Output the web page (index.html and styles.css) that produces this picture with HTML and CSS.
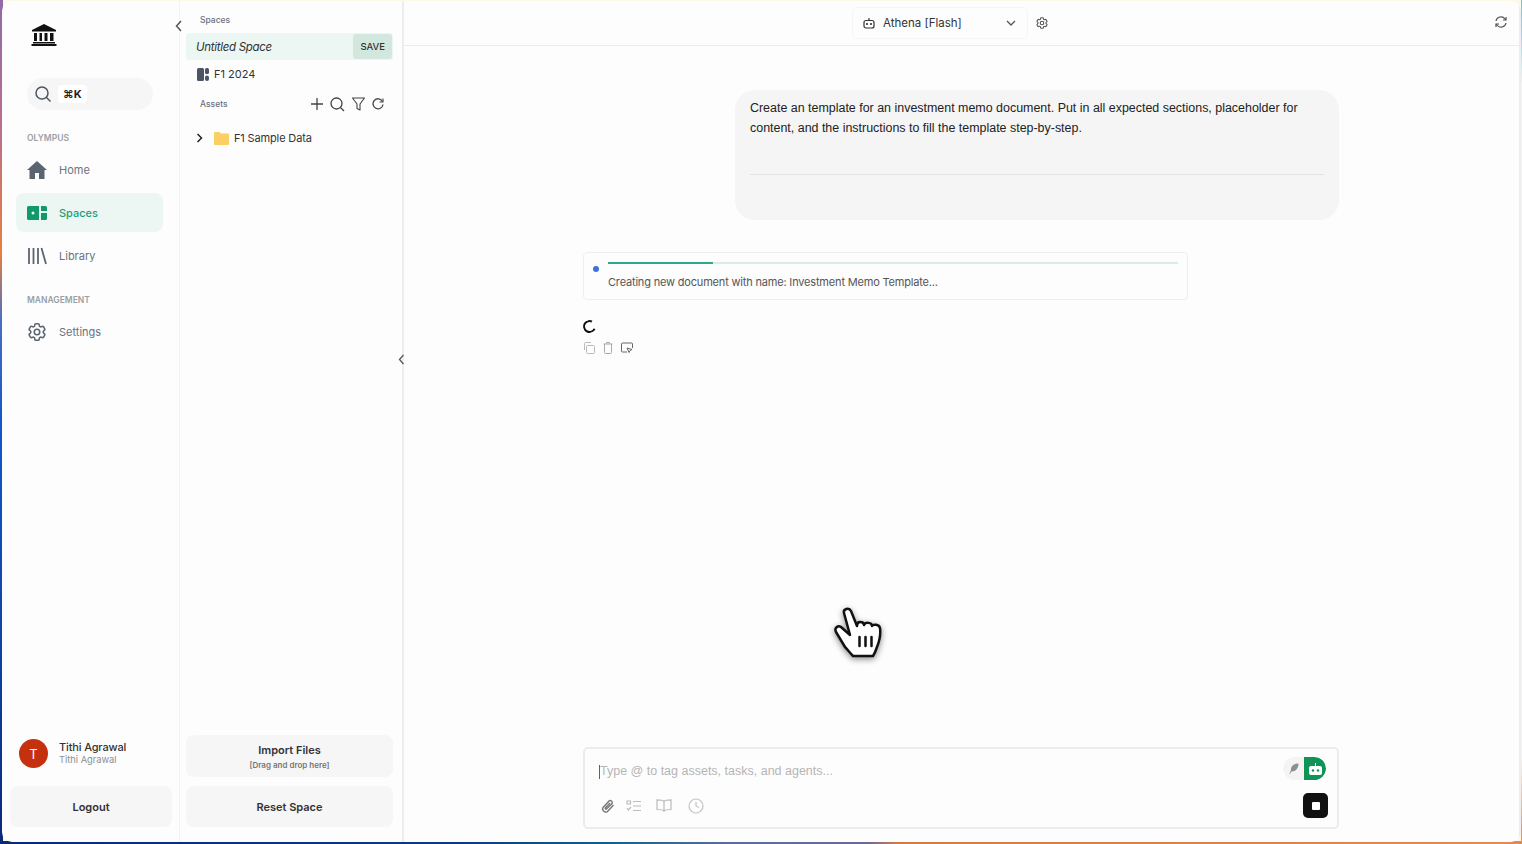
FILE: index.html
```html
<!DOCTYPE html>
<html lang="en">
<head>
    <meta charset="UTF-8">
    <meta name="viewport" content="width=device-width, initial-scale=1.0">
    <title>Olympus</title>
    <link rel="stylesheet" href="styles.css">
</head>
<body>
<div class="window">

    <!-- left nav -->
    <aside class="sidebar">
        <div class="logo">
            <svg width="26" height="22" viewBox="0 0 26 22" fill="#111"><path d="M13 0 25 6v1.500H1V6zM3 9h3v8H3zM8.500 9h2.500v8H8.500zM13.500 9h3v8h-3zM19 9h3.500v8H19zM2 18h22v1.500H2zM0.500 20h25v2H0.500z"/></svg>
        </div>
        <div class="search-pill">
            <svg width="18" height="18" viewBox="0 0 18 18" fill="none" stroke="#4b5563" stroke-width="1.500"><circle cx="8" cy="8" r="6"/><path d="m12.500 12.500 4 4"/></svg>
            <span class="kbd">⌘K</span>
        </div>
        <div class="nav-label">OLYMPUS</div>
        <a class="nav-item">
            <svg width="20" height="18" viewBox="0 0 20 18" fill="#5b6572"><path d="M10 0 20 9h-2.500v9H12v-6H8v6H2.500V9H0z"/></svg>
            Home
        </a>
        <a class="nav-item active">
            <svg width="20" height="16" viewBox="0 0 20 16" fill="#109a6c"><path d="M1.500 1h10.500v14H1.500A1.500 1.500 0 0 1 0 13.500v-11A1.500 1.500 0 0 1 1.500 1zM14 1h4.500A1.500 1.500 0 0 1 20 2.500V6h-6zM14 8h6v5.500a1.500 1.500 0 0 1-1.500 1.500H14z"/><circle cx="6" cy="8" r="1.500" fill="#e8f5f0"/></svg>
            Spaces
        </a>
        <a class="nav-item">
            <svg width="20" height="18" viewBox="0 0 20 18" fill="none" stroke="#5b6572" stroke-width="1.800"><path d="M2 1v16M6.500 1v16M11 1v16M14.500 1l4.500 16"/></svg>
            Library
        </a>
        <div class="nav-label second">MANAGEMENT</div>
        <a class="nav-item">
            <svg width="22" height="22" viewBox="0 0 24 24" fill="none" stroke="#5b6572" stroke-width="1.700" stroke-linejoin="round"><path d="M9.594 3.940c.09-.542.56-.94 1.110-.94h2.593c.55 0 1.020.398 1.110.94l.213 1.281c.063.374.313.686.645.870.074.04.147.083.22.127.324.196.72.257 1.075.124l1.217-.456a1.125 1.125 0 0 1 1.370.49l1.296 2.247a1.125 1.125 0 0 1-.26 1.431l-1.003.827c-.293.24-.438.613-.431.992a6.759 6.759 0 0 1 0 .255c-.007.378.138.75.43.99l1.005.828c.424.35.534.954.26 1.430l-1.298 2.247a1.125 1.125 0 0 1-1.369.491l-1.217-.456c-.355-.133-.75-.072-1.076.124a6.570 6.570 0 0 1-.22.128c-.331.183-.581.495-.644.869l-.213 1.280c-.09.543-.56.941-1.110.941h-2.594c-.55 0-1.020-.398-1.110-.94l-.213-1.281c-.062-.374-.312-.686-.644-.87a6.520 6.520 0 0 1-.22-.127c-.325-.196-.72-.257-1.076-.124l-1.217.456a1.125 1.125 0 0 1-1.369-.49l-1.297-2.247a1.125 1.125 0 0 1 .26-1.431l1.004-.827c.292-.24.437-.613.43-.992a6.932 6.932 0 0 1 0-.255c.007-.378-.138-.75-.43-.99l-1.004-.828a1.125 1.125 0 0 1-.26-1.430l1.297-2.247a1.125 1.125 0 0 1 1.370-.491l1.216.456c.356.133.751.072 1.076-.124.072-.044.146-.087.22-.128.332-.183.582-.495.644-.869l.214-1.281z"/><circle cx="12" cy="12" r="3"/></svg>
            Settings
        </a>

        <div class="user">
            <div class="avatar">T</div>
            <div>
                <div class="user-name">Tithi Agrawal</div>
                <div class="user-sub">Tithi Agrawal</div>
            </div>
        </div>
        <button class="soft-btn logout">Logout</button>

        <svg class="collapse-left" width="8" height="12" viewBox="0 0 8 12" fill="none" stroke="#555" stroke-width="1.500"><path d="M6 1 1.500 6 6 11"/></svg>
    </aside>

    <!-- spaces panel -->
    <section class="panel">
        <div class="panel-label">Spaces</div>
        <div class="space-row">
            <em>Untitled Space</em>
            <span class="save">SAVE</span>
        </div>
        <div class="space-item">
            <svg width="12" height="13" viewBox="0 0 12 13" fill="#4b5563"><rect width="7" height="13" rx="1.500"/><rect x="8" width="4" height="6" rx="1.500"/><rect x="8" y="7.500" width="4" height="5.500" rx="2"/></svg>
            F1 2024
        </div>
        <div class="assets-head">
            <span class="panel-label">Assets</span>
            <div class="asset-tools">
                <svg width="12" height="12" viewBox="0 0 12 12" stroke="#444" stroke-width="1.300"><path d="M6 0v12M0 6h12"/></svg>
                <svg width="15" height="15" viewBox="0 0 15 15" fill="none" stroke="#444" stroke-width="1.300"><circle cx="6.500" cy="6.500" r="5.500"/><path d="m10.500 10.500 3.500 3.500"/></svg>
                <svg width="13" height="14" viewBox="0 0 13 14" fill="none" stroke="#444" stroke-width="1.100" stroke-linejoin="round"><path d="M.5 1h12L8 7v6L5 11.500V7z"/></svg>
                <svg width="12" height="12" viewBox="0 0 12 12" fill="none" stroke="#444" stroke-width="1.300"><path d="M10.500 3.500A5 5 0 1 0 11 6.500"/><path d="M11 .5v3.500H7.500" stroke-width="1.100"/></svg>
            </div>
        </div>
        <div class="tree-row">
            <svg width="7" height="10" viewBox="0 0 7 10" fill="none" stroke="#222" stroke-width="1.500"><path d="m1.500 1 4 4-4 4"/></svg>
            <svg class="folder" width="15" height="13" viewBox="0 0 15 13" fill="#fbcf62"><path d="M1 0h4.500l1.500 1.500h7a1 1 0 0 1 1 1V12a1 1 0 0 1-1 1H1a1 1 0 0 1-1-1V1a1 1 0 0 1 1-1z"/></svg>
            F1 Sample Data
        </div>
        <div class="panel-bottom">
            <button class="soft-btn import">Import Files<small>[Drag and drop here]</small></button>
            <button class="soft-btn">Reset Space</button>
        </div>
        <svg class="collapse-right" width="7" height="11" viewBox="0 0 7 11" fill="none" stroke="#555" stroke-width="1.300"><path d="M5.500 1 1.500 5.500 5.500 10"/></svg>
    </section>

    <!-- chat -->
    <main class="main">
        <header class="topbar">
            <div class="agent-select">
                <svg width="12" height="12" viewBox="0 0 12 12" fill="none" stroke="#333" stroke-width="1.200"><rect x="1" y="3.500" width="10" height="7.500" rx="2"/><path d="M6 3.500V1"/><circle cx="4" cy="7" r=".5"/><circle cx="8" cy="7" r=".5"/></svg>
                <span>Athena [Flash]</span>
                <svg class="chev" width="10" height="6" viewBox="0 0 10 6" fill="none" stroke="#555" stroke-width="1.300"><path d="m1 1 4 4 4-4"/></svg>
            </div>
            <svg class="top-gear" width="14" height="14" viewBox="0 0 24 24" fill="none" stroke="#555" stroke-width="1.900" stroke-linejoin="round"><path d="M9.594 3.940c.09-.542.56-.94 1.110-.94h2.593c.55 0 1.020.398 1.110.94l.213 1.281c.063.374.313.686.645.870.074.04.147.083.22.127.324.196.72.257 1.075.124l1.217-.456a1.125 1.125 0 0 1 1.370.49l1.296 2.247a1.125 1.125 0 0 1-.26 1.431l-1.003.827c-.293.24-.438.613-.431.992a6.759 6.759 0 0 1 0 .255c-.007.378.138.75.43.99l1.005.828c.424.35.534.954.26 1.430l-1.298 2.247a1.125 1.125 0 0 1-1.369.491l-1.217-.456c-.355-.133-.75-.072-1.076.124a6.570 6.570 0 0 1-.22.128c-.331.183-.581.495-.644.869l-.213 1.280c-.09.543-.56.941-1.110.941h-2.594c-.55 0-1.020-.398-1.110-.94l-.213-1.281c-.062-.374-.312-.686-.644-.87a6.520 6.520 0 0 1-.22-.127c-.325-.196-.72-.257-1.076-.124l-1.217.456a1.125 1.125 0 0 1-1.369-.49l-1.297-2.247a1.125 1.125 0 0 1 .26-1.431l1.004-.827c.292-.24.437-.613.43-.992a6.932 6.932 0 0 1 0-.255c.007-.378-.138-.75-.43-.99l-1.004-.828a1.125 1.125 0 0 1-.26-1.430l1.297-2.247a1.125 1.125 0 0 1 1.370-.491l1.216.456c.356.133.751.072 1.076-.124.072-.044.146-.087.22-.128.332-.183.582-.495.644-.869l.214-1.281z"/><circle cx="12" cy="12" r="3"/></svg>
            <svg class="top-refresh" width="12" height="12" viewBox="0 0 12 12" fill="none" stroke="#555" stroke-width="1.200"><path d="M1 5A5 5 0 0 1 10 3l1 1M11 7a5 5 0 0 1-9 2L1 8"/><path d="M11 1v3H8M1 11V8h3"/></svg>
        </header>

        <div class="chat">
            <div class="bubble">
                <p>Create an template for an investment memo document. Put in all expected sections, placeholder for content, and the instructions to fill the template step-by-step.</p>
                <hr>
            </div>

            <div class="progress-card">
                <span class="dot"></span>
                <div class="progress-body">
                    <div class="track"><div class="fill" style="width: 18.5%"></div></div>
                    <div class="progress-text">Creating new document with name: Investment Memo Template...</div>
                </div>
            </div>

            <div class="spinner"></div>
            <div class="msg-tools">
                <svg width="12" height="12" viewBox="0 0 12 12" fill="none" stroke="#bbb" stroke-width="1"><rect x="3.500" y="3.500" width="8" height="8" rx="1"/><path d="M1.500 8V1.500A1 1 0 0 1 2.500.5H8"/></svg>
                <svg width="10" height="12" viewBox="0 0 10 12" fill="none" stroke="#aaa" stroke-width="1"><path d="M.5 2h9M1.500 2v8.500a1 1 0 0 0 1 1h5a1 1 0 0 0 1-1V2M3.500 2V.5h3V2"/></svg>
                <svg width="12" height="12" viewBox="0 0 12 12" fill="none" stroke="#666" stroke-width="1"><path d="M6 10H1.500a1 1 0 0 1-1-1V2a1 1 0 0 1 1-1h9a1 1 0 0 1 1 1v4"/><path d="m6 6 5 1.500-2 1-1 2z"/></svg>
            </div>

            <div class="composer">
                <div class="composer-top">
                    <div class="placeholder"><span class="caret"></span>Type @ to tag assets, tasks, and agents...</div>
                    <div class="mode-toggle">
                        <span class="mode-off">
                            <svg width="10" height="11" viewBox="0 0 10 11" fill="#8b8f96"><path d="M9.500.5C6 .5 2.500 2 2 6l-.2 1.500L.5 10.500l.7.300L2.500 8.500C7 8.500 9.500 5 9.500.5z"/></svg>
                        </span>
                        <span class="mode-on">
                            <svg width="13" height="12" viewBox="0 0 13 12" fill="#fff"><path d="M6 0h1v3H6z"/><rect y="3" width="13" height="9" rx="2"/><circle cx="4" cy="7.500" r="1.200" fill="#0f9457"/><circle cx="9" cy="7.500" r="1.200" fill="#0f9457"/></svg>
                        </span>
                    </div>
                </div>
                <div class="composer-bottom">
                    <div class="composer-tools">
                        <svg width="14" height="14" viewBox="0 0 14 14" fill="none" stroke="#777" stroke-width="1.400"><path d="M12.500 6 7 12a3 3 0 0 1-4.500-4L8 2a2 2 0 0 1 3 2.500L5.500 10a.8.800 0 0 1-1.200-1L9 4"/></svg>
                        <svg width="15" height="12" viewBox="0 0 15 12" fill="none" stroke="#bbb" stroke-width="1.200"><path d="M7 1.500h8M7 6h8M7 10.500h8M1 1h3.500v3H1zM1 8l1.500 2 2.500-3"/></svg>
                        <svg width="16" height="13" viewBox="0 0 16 13" fill="none" stroke="#bbb" stroke-width="1.200"><path d="M8 2.500C7 1 5 .8 1 .8v9.700c4 0 6 .2 7 1.700 1-1.500 3-1.700 7-1.700V.8c-4 0-6 .2-7 1.700zM8 2.500v9.700"/></svg>
                        <svg width="16" height="16" viewBox="0 0 16 16" fill="none" stroke="#c4c4c4" stroke-width="1.200"><circle cx="8" cy="8" r="7"/><path d="M8 4v4l3 1.500"/></svg>
                    </div>
                    <button class="stop-btn"><span></span></button>
                </div>
            </div>
        </div>
    </main>

    <!-- screen recording pointer, sits over the chat -->
    <svg class="hand" width="80" height="75" viewBox="0 0 80 75">
        <path d="M23 17c-1-4 5-6 7-2l6 15c0-3 1-4 3-4 3 0 4 1 4 3 1-3 8-3 8 1 1-2 7-2 8 2 1 7-1 14-3 19-1 3-2 6-4 9H32c-3-3-5-6-8-9l-9-15c-2-4 2-7 5-5l9 8z" fill="#fff" stroke="#111" stroke-width="2.500" stroke-linejoin="round"/>
        <path d="M38.500 41v9M44.500 41v9M50.500 41v9" stroke="#111" stroke-width="2.500" stroke-linecap="round"/>
    </svg>
</div>
</body>
</html>
```

FILE: styles.css
```css
* {
    box-sizing: border-box;
}

html, body {
    height: 100%;
    margin: 0;
}

body {
    font-family: Inter, "Liberation Sans", sans-serif;
    color: #333;
    overflow: hidden;
    padding: 1px 1px 2px 2px;
    background:
        linear-gradient(180deg, #8f6aa8 0%, #b8708c 15%, #e5803f 30%, #4a6fc0 38%, #1456c8 50%, #0f44a8 75%, #0a2a78 100%) left / 3px 100% no-repeat,
        linear-gradient(90deg, #0a2a78 0%, #0b3a80 30%, #12608a 40%, #5a6ea0 48%, #6a6a98 57%, #d57a45 59%, #e08a55 100%) bottom / 100% 3px no-repeat,
        linear-gradient(180deg, #5ec8e8 0%, #f4f4f4 10%, #f4f4f4 90%, #e08a55 100%) right / 1px 100% no-repeat,
        #fdf9e8;
}

.window {
    position: relative;
    display: flex;
    height: 100%;
    background: #fdfdfd;
    border-radius: 10px;
    overflow: hidden;
}

/* left nav */
.sidebar {
    position: relative;
    width: 178px;
    flex: none;
    display: flex;
    flex-direction: column;
    padding: 0 8px 15px 8px;
    border-right: 1px solid #f3f3f3;
}

.logo {
    margin: 23px 0 0 21px;
    height: 22px;
}

.search-pill {
    margin: 32px 0 0 17px;
    width: 126px;
    height: 32px;
    border-radius: 16px;
    background: #f6f6f6;
    display: flex;
    align-items: center;
    gap: 6px;
    padding-left: 7px;
}

.kbd {
    background: #fff;
    border-radius: 4px;
    padding: 2px 5px;
    font-size: 11px;
    font-weight: 700;
    color: #222;
}

.nav-label {
    margin: 23px 0 0 17px;
    font-size: 8.500px;
    line-height: 11px;
    font-weight: 600;
    color: #9a9fa6;
}

.nav-label.second {
    margin-top: 20px;
}

.nav-item {
    display: flex;
    align-items: center;
    gap: 12px;
    height: 39px;
    margin: 4px 8px 0 6px;
    padding-left: 11px;
    border-radius: 8px;
    font-size: 11px;
    color: #6b7280;
}

.nav-label + .nav-item {
    margin-top: 6px;
}

.nav-item.active {
    background: #ecf6f2;
    color: #1f9e77;
    font-weight: 500;
}

.nav-item svg {
    flex: none;
}

/* settings icon is drawn wider than the others */
.nav-item:last-of-type svg {
    margin: 0 -1px;
}

.user {
    margin-top: auto;
    margin-left: 9px;
    display: flex;
    align-items: center;
    gap: 11px;
}

.avatar {
    width: 29px;
    height: 29px;
    border-radius: 50%;
    background: #c5310f;
    color: #fff;
    font-size: 13px;
    display: flex;
    align-items: center;
    justify-content: center;
}

.user-name {
    font-size: 11px;
    line-height: 13px;
    font-weight: 500;
    letter-spacing: -.15px;
    color: #333;
}

.user-sub {
    font-size: 9.300px;
    line-height: 12px;
    color: #8b8f96;
}

.soft-btn {
    border: none;
    border-radius: 8px;
    background: #f6f6f6;
    font-family: inherit;
    font-size: 11px;
    font-weight: 600;
    color: #333;
    height: 41px;
    width: 100%;
}

.logout {
    margin-top: 18px;
    width: 162px;
}

.collapse-left {
    position: absolute;
    right: -4px;
    top: 19px;
}

/* spaces panel */
.panel {
    position: relative;
    width: 224px;
    flex: none;
    display: flex;
    flex-direction: column;
    padding: 14px 9px 15px 6px;
    border-right: 2px solid #ededed;
}

.panel-label {
    font-size: 8.500px;
    line-height: 11px;
    color: #6b7280;
    font-weight: 500;
    margin-left: 14px;
}

.space-row {
    margin-top: 7px;
    height: 27px;
    background: #ecf6f2;
    border-radius: 3px;
    display: flex;
    align-items: center;
    justify-content: space-between;
    padding: 0 1px 0 10px;
    font-size: 11.500px;
    letter-spacing: -.3px;
    color: #333;
}

.save {
    background: #d2e7de;
    border-radius: 3px;
    font-size: 9.500px;
    letter-spacing: 0;
    line-height: 25px;
    padding: 0 7px;
    color: #333;
    font-weight: 500;
}

.space-item {
    margin: 7px 0 0 11px;
    height: 14px;
    display: flex;
    align-items: center;
    gap: 5px;
    font-size: 11px;
    color: #333;
}

.assets-head {
    margin-top: 16px;
    height: 14px;
    display: flex;
    align-items: center;
    justify-content: space-between;
    padding-right: 9px;
}

.asset-tools {
    display: flex;
    align-items: center;
    gap: 7px;
}

.tree-row {
    margin: 20px 0 0 10px;
    display: flex;
    align-items: center;
    font-size: 11px;
    letter-spacing: -.15px;
    line-height: 14px;
    color: #333;
}

.folder {
    margin: 0 5px 0 11px;
}

.panel-bottom {
    margin-top: auto;
    display: flex;
    flex-direction: column;
    gap: 9px;
}

.soft-btn.import {
    height: 42px;
    display: flex;
    flex-direction: column;
    align-items: center;
    justify-content: center;
    gap: 3px;
}

.soft-btn small {
    font-size: 8px;
    font-weight: 600;
    color: #777;
}

.collapse-right {
    position: absolute;
    right: -3px;
    top: 353px;
}

/* chat */
.main {
    flex: 1;
    min-width: 0;
    display: flex;
    flex-direction: column;
    border-right: 2px solid #ededed;
}

.topbar {
    position: relative;
    height: 45px;
    flex: none;
    border-bottom: 1px solid #ececec;
    display: flex;
    align-items: center;
    padding-left: 448px;
}

.agent-select {
    width: 176px;
    height: 32px;
    border: 1px solid #f5f5f5;
    border-radius: 5px;
    display: flex;
    align-items: center;
    padding: 0 11px 0 10px;
    font-size: 11.500px;
    color: #333;
    gap: 8px;
}

.chev {
    margin-left: auto;
}

.top-gear {
    margin-left: 7px;
}

.top-refresh {
    position: absolute;
    right: 12px;
    top: 15px;
}

.chat {
    flex: 1;
    min-height: 0;
    width: 756px;
    margin-left: 179px;
    display: flex;
    flex-direction: column;
    padding: 44px 0 13px 0;
}

.bubble {
    align-self: flex-end;
    width: 604px;
    height: 130px;
    border-radius: 20px;
    background: #f5f5f5;
    padding: 8px 15px 0;
    font-family: "Liberation Sans", Arial, sans-serif;
    font-size: 12.450px;
    line-height: 20px;
    color: #222;
}

.bubble p {
    margin: 0;
}

.bubble hr {
    border: none;
    border-top: 1px solid #e2e2e2;
    margin: 36px 0 0;
}

.progress-card {
    margin-top: 32px;
    width: 605px;
    height: 48px;
    border: 1px solid #efefef;
    border-radius: 4px;
    display: flex;
    padding: 9px 9px 0 9px;
    gap: 9px;
}

.dot {
    width: 6px;
    height: 6px;
    margin-top: 4px;
    border-radius: 50%;
    background: #3b74d8;
    flex: none;
}

.progress-body {
    flex: 1;
}

.track {
    height: 2px;
    background: #d9ece6;
}

.fill {
    height: 100%;
    background: #2fa98a;
}

.progress-text {
    margin-top: 8px;
    font-size: 11px;
    letter-spacing: -.18px;
    line-height: 20px;
    color: #555;
}

.spinner {
    margin-top: 20px;
    width: 13px;
    height: 13px;
    border-radius: 50%;
    border: 2px solid #111;
    border-right-color: transparent;
    transform: rotate(-20deg);
}

.msg-tools {
    margin: 9px 0 0 0;
    display: flex;
    align-items: center;
    gap: 8px;
}

.composer {
    margin-top: auto;
    height: 82px;
    border: 2px solid #ececec;
    border-radius: 5px;
    padding: 7px 11px 9px 14px;
    display: flex;
    flex-direction: column;
    justify-content: space-between;
}

.composer-top {
    display: flex;
    justify-content: space-between;
    align-items: flex-start;
}

.placeholder {
    display: flex;
    align-items: center;
    margin-top: 8px;
    font-family: "Liberation Sans", Arial, sans-serif;
    font-size: 12.500px;
    line-height: 15px;
    color: #b5b5b5;
}

.caret {
    width: 1px;
    height: 14px;
    background: #5a4fcf;
}

.mode-toggle {
    display: flex;
    height: 23px;
    margin-top: 1px;
    border-radius: 12px;
    overflow: hidden;
}

.mode-off {
    width: 21px;
    background: #f4f4f4;
    border-radius: 12px 0 0 12px;
    display: flex;
    align-items: center;
    justify-content: center;
}

.mode-on {
    width: 22px;
    background: #0f9457;
    border-radius: 0 12px 12px 0;
    display: flex;
    align-items: center;
    justify-content: center;
}

.composer-bottom {
    display: flex;
    justify-content: space-between;
    align-items: center;
}

.composer-tools {
    display: flex;
    align-items: center;
    gap: 14px;
    margin-left: 2px;
}

.composer-tools svg:first-child {
    margin-right: -3px;
}

.composer-tools svg:nth-child(3) {
    margin-left: 1px;
}

.composer-tools svg:last-child {
    margin-left: 2px;
}

.stop-btn {
    width: 25px;
    height: 25px;
    margin-right: -2px;
    border: none;
    border-radius: 5px;
    background: #111;
    display: flex;
    align-items: center;
    justify-content: center;
    padding: 0;
}

.stop-btn span {
    width: 8px;
    height: 8px;
    border-radius: 1px;
    background: #fff;
}

.hand {
    position: absolute;
    left: 819px;
    top: 595px;
    filter: drop-shadow(0 2px 3px rgba(0, 0, 0, .45));
}
```
